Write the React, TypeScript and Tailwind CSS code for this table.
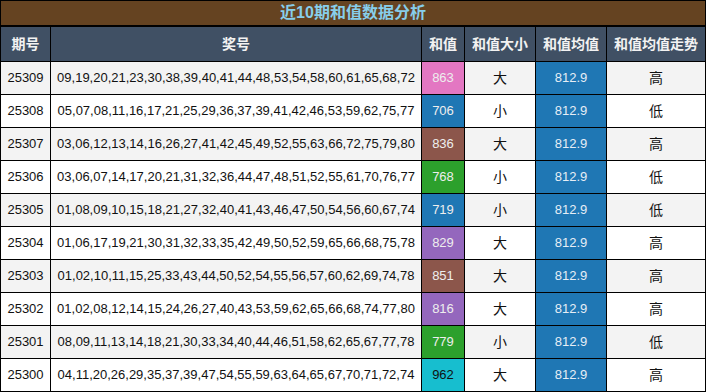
import React from "react";

type Row = { q: string; nums: string; sum: number; color: string; dark?: boolean; size: string; trend: string };

const rows: Row[] = [
  { q: "25309", nums: "09,19,20,21,23,30,38,39,40,41,44,48,53,54,58,60,61,65,68,72", sum: 863, color: "bg-[#e377c2]", size: "大", trend: "高" },
  { q: "25308", nums: "05,07,08,11,16,17,21,25,29,36,37,39,41,42,46,53,59,62,75,77", sum: 706, color: "bg-[#1f77b4]", size: "小", trend: "低" },
  { q: "25307", nums: "03,06,12,13,14,16,26,27,41,42,45,49,52,55,63,66,72,75,79,80", sum: 836, color: "bg-[#8c564b]", size: "大", trend: "高" },
  { q: "25306", nums: "03,06,07,14,17,20,21,31,32,36,44,47,48,51,52,55,61,70,76,77", sum: 768, color: "bg-[#2ca02c]", size: "小", trend: "低" },
  { q: "25305", nums: "01,08,09,10,15,18,21,27,32,40,41,43,46,47,50,54,56,60,67,74", sum: 719, color: "bg-[#1f77b4]", size: "小", trend: "低" },
  { q: "25304", nums: "01,06,17,19,21,30,31,32,33,35,42,49,50,52,59,65,66,68,75,78", sum: 829, color: "bg-[#9467bd]", size: "大", trend: "高" },
  { q: "25303", nums: "01,02,10,11,15,25,33,43,44,50,52,54,55,56,57,60,62,69,74,78", sum: 851, color: "bg-[#8c564b]", size: "大", trend: "高" },
  { q: "25302", nums: "01,02,08,12,14,15,24,26,27,40,43,53,59,62,65,66,68,74,77,80", sum: 816, color: "bg-[#9467bd]", size: "大", trend: "高" },
  { q: "25301", nums: "08,09,11,13,14,18,21,30,33,34,40,44,46,51,58,62,65,67,77,78", sum: 779, color: "bg-[#2ca02c]", size: "小", trend: "低" },
  { q: "25300", nums: "04,11,20,26,29,35,37,39,47,54,55,59,63,64,65,67,70,71,72,74", sum: 962, color: "bg-[#17becf]", dark: true, size: "大", trend: "高" },
];

const headers = ["期号", "奖号", "和值", "和值大小", "和值均值", "和值均值走势"];

export default function App() {
  return (
    <div
      className="w-[706px] h-[392px] bg-black p-px flex flex-col"
      style={{ fontFamily: '"Liberation Sans", "Noto Sans CJK SC", sans-serif' }}
    >
      <div className="h-[24px] bg-[#654321] flex items-center justify-center text-[16px] font-bold text-[#87ceeb] leading-none">
        近10期和值数据分析
      </div>
      <div className="mt-[2px] grid grid-cols-[49px_370px_42px_70px_70px_98px] grid-rows-[34px_repeat(10,32px)] gap-px">
        {headers.map((h) => (
          <div key={h} className="bg-[#405064] flex items-center justify-center text-[14px] font-bold text-[#f2f2f2]">
            {h}
          </div>
        ))}
        {rows.map((r, i) => {
          const bg = i % 2 === 0 ? "bg-[#f3f3f3]" : "bg-white";
          return (
            <React.Fragment key={r.q}>
              <div className={`${bg} flex items-center justify-center text-[13px] text-[#111]`}>{r.q}</div>
              <div className={`${bg} flex items-center justify-center text-[13px] text-[#111]`}>{r.nums}</div>
              <div className={`${r.color} flex items-center justify-center text-[13px] ${r.dark ? "text-[#111]" : "text-[#eeeeee]"}`}>
                {r.sum}
              </div>
              <div className={`${bg} flex items-center justify-center text-[14px] text-[#111]`}>{r.size}</div>
              <div className="bg-[#1f77b4] flex items-center justify-center text-[13px] text-[#e6eef6]">812.9</div>
              <div className={`${bg} flex items-center justify-center text-[14px] text-[#111]`}>{r.trend}</div>
            </React.Fragment>
          );
        })}
      </div>
    </div>
  );
}
